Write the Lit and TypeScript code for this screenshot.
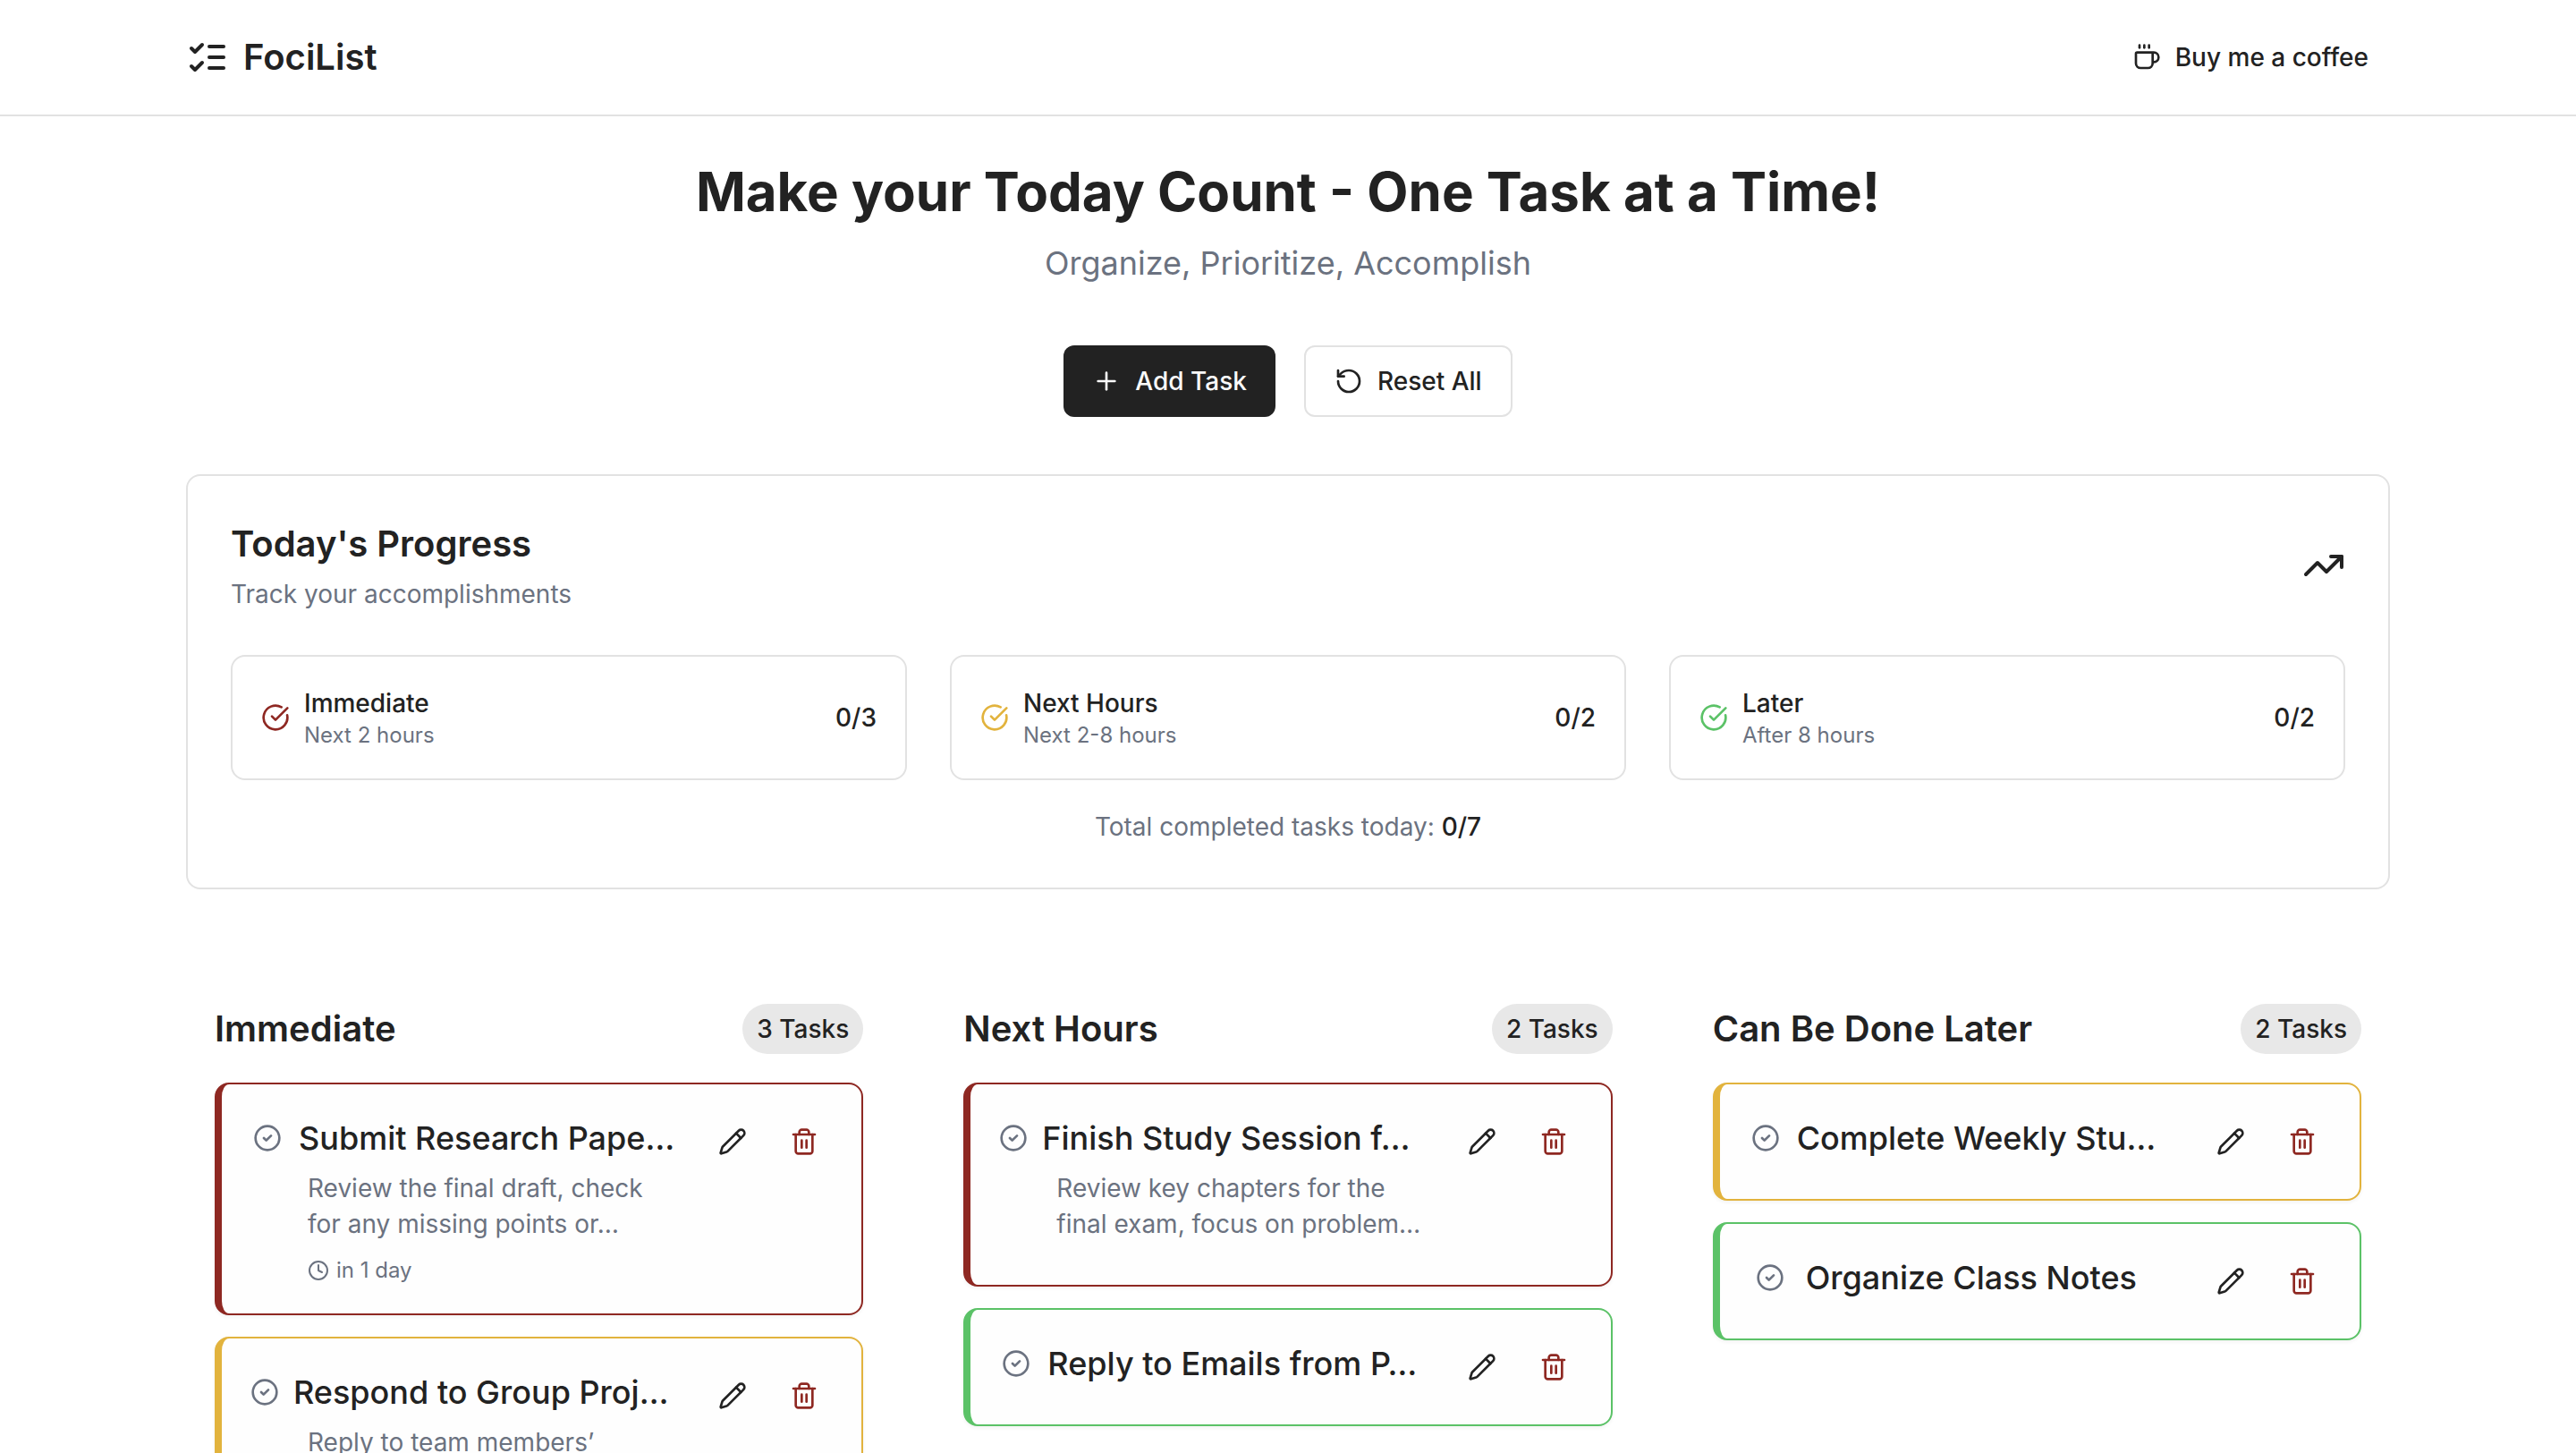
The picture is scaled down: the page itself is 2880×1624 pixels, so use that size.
import { LitElement, html, css, svg, nothing, type TemplateResult } from "lit";
import { customElement, property } from "lit/decorators.js";
import { classMap } from "lit/directives/class-map.js";

type Tone = "high" | "medium" | "low";
type Lead = "tight" | "normal" | "roomy";

interface Task {
  title: string;
  description?: string;
  due?: string;
  tone: Tone;
  lead: Lead;
}

interface Column {
  heading: string;
  count: number;
  tasks: Task[];
}

interface Stat {
  label: string;
  range: string;
  done: string;
  tone: Tone;
}

const shapes = {
  list: svg`<path d="m3 17 2 2 4-4"/><path d="m3 7 2 2 4-4"/><path d="M13 6h8"/><path d="M13 12h8"/><path d="M13 18h8"/>`,
  coffee: svg`<path d="M10 2v2"/><path d="M14 2v2"/><path d="M16 8a1 1 0 0 1 1 1v8a4 4 0 0 1-4 4H7a4 4 0 0 1-4-4V9a1 1 0 0 1 1-1h14a4 4 0 1 1 0 8h-1"/><path d="M6 2v2"/>`,
  plus: svg`<path d="M5 12h14"/><path d="M12 5v14"/>`,
  reset: svg`<path d="M3 12a9 9 0 1 0 9-9 9.75 9.75 0 0 0-6.74 2.74L3 8"/><path d="M3 3v5h5"/>`,
  trend: svg`<path d="M22 7 13.5 15.5 8.5 10.5 2 17"/><path d="M16 7h6v6"/>`,
  checkOpen: svg`<path d="M21.801 10A10 10 0 1 1 17 3.335"/><path d="m9 11 3 3L22 4"/>`,
  check: svg`<circle cx="12" cy="12" r="10"/><path d="m9 12 2 2 4-4"/>`,
  clock: svg`<circle cx="12" cy="12" r="10"/><path d="M12 6v6l4 2"/>`,
  pencil: svg`<path d="M21.174 6.812a1 1 0 0 0-3.986-3.987L3.842 16.174a2 2 0 0 0-.5.83l-1.321 4.352a.5.5 0 0 0 .623.622l4.353-1.32a2 2 0 0 0 .83-.497z"/><path d="m15 5 4 4"/>`,
  trash: svg`<path d="M3 6h18"/><path d="M19 6v14c0 1-1 2-2 2H7c-1 0-2-1-2-2V6"/><path d="M8 6V4c0-1 1-2 2-2h4c1 0 2 1 2 2v2"/><path d="M10 11v6"/><path d="M14 11v6"/>`,
};

const icon = (name: keyof typeof shapes, size: "sm" | "md" | "lg" = "md"): TemplateResult => html`
  <svg class="icon ${size}" viewBox="0 0 24 24" aria-hidden="true">${shapes[name]}</svg>
`;

const base = css`
  :host {
    --ink: #222222;
    --muted: #6b7280;
    --line: #e2e2e2;
    --high: #8e2822;
    --medium: #e2b33d;
    --low: #5bc267;
  }
  * {
    box-sizing: border-box;
    margin: 0;
  }
  button {
    font: inherit;
    color: inherit;
    border: 0;
    padding: 0;
    background: none;
    cursor: pointer;
  }
  .icon {
    display: block;
    flex: none;
    fill: none;
    stroke: currentColor;
    stroke-width: 2;
    stroke-linecap: round;
    stroke-linejoin: round;
  }
  .sm {
    width: 24px;
    height: 24px;
  }
  .md {
    width: 32px;
    height: 32px;
  }
  .lg {
    width: 48px;
    height: 48px;
  }
  .high {
    --tone: var(--high);
  }
  .medium {
    --tone: var(--medium);
  }
  .low {
    --tone: var(--low);
  }
`;

@customElement("task-card")
export class TaskCard extends LitElement {
  @property({ attribute: false }) task!: Task;

  static styles = [
    base,
    css`
      :host {
        display: block;
      }
      .card {
        display: flex;
        align-items: flex-start;
        gap: 16px;
        padding: 32px;
        border: 2px solid var(--tone);
        border-left-width: 8px;
        border-radius: 16px;
        background: #fefefe;
        box-shadow: 0 2px 4px rgba(0, 0, 0, 0.05);
      }
      .card.open {
        padding-bottom: 48px;
      }
      .body {
        flex: 1;
        min-width: 0;
        padding-right: 16px;
      }
      .head {
        display: flex;
        align-items: center;
        gap: 16px;
      }
      .toggle {
        display: flex;
        justify-content: center;
        width: 38px;
        flex: none;
        color: var(--muted);
      }
      .tight .toggle {
        width: 32px;
      }
      .roomy .toggle {
        width: 48px;
      }
      .title {
        font-size: 36px;
        line-height: 56px;
        font-weight: 500;
        white-space: nowrap;
      }
      .details {
        display: flex;
        flex-direction: column;
        gap: 16px;
        padding: 8px 0 0 64px;
        color: var(--muted);
      }
      .description {
        font-size: 28px;
        line-height: 40px;
      }
      .due {
        display: flex;
        align-items: center;
        gap: 8px;
        font-size: 24px;
        line-height: 32px;
      }
      .actions {
        display: flex;
        gap: 16px;
      }
      .action {
        display: grid;
        place-items: center;
        width: 64px;
        height: 64px;
        border-radius: 12px;
      }
      .remove {
        color: var(--high);
      }
    `,
  ];

  render() {
    const { title, description, due, tone, lead } = this.task;
    const open = Boolean(description) && !due;
    return html`
      <article class=${classMap({ card: true, [tone]: true, open })}>
        <div class="body">
          <div class="head ${lead}">
            <button class="toggle" aria-label="Mark as done">${icon("check")}</button>
            <h3 class="title">${title}</h3>
          </div>
          ${description
            ? html`<div class="details">
                <p class="description">${description}</p>
                ${due ? html`<p class="due">${icon("clock", "sm")}<span>${due}</span></p>` : nothing}
              </div>`
            : nothing}
        </div>
        <div class="actions">
          <button class="action" aria-label="Edit task">${icon("pencil")}</button>
          <button class="action remove" aria-label="Delete task">${icon("trash")}</button>
        </div>
      </article>
    `;
  }
}

@customElement("app-root")
export class AppRoot extends LitElement {
  private stats: Stat[] = [
    { label: "Immediate", range: "Next 2 hours", done: "0/3", tone: "high" },
    { label: "Next Hours", range: "Next 2-8 hours", done: "0/2", tone: "medium" },
    { label: "Later", range: "After 8 hours", done: "0/2", tone: "low" },
  ];

  private columns: Column[] = [
    {
      heading: "Immediate",
      count: 3,
      tasks: [
        {
          title: "Submit Research Pape…",
          description: "Review the final draft, check for any missing points or…",
          due: "in 1 day",
          tone: "high",
          lead: "normal",
        },
        {
          title: "Respond to Group Proj…",
          description: "Reply to team members’",
          tone: "medium",
          lead: "tight",
        },
      ],
    },
    {
      heading: "Next Hours",
      count: 2,
      tasks: [
        {
          title: "Finish Study Session f…",
          description: "Review key chapters for the final exam, focus on problem…",
          tone: "high",
          lead: "tight",
        },
        { title: "Reply to Emails from P…", tone: "low", lead: "normal" },
      ],
    },
    {
      heading: "Can Be Done Later",
      count: 2,
      tasks: [
        { title: "Complete Weekly Stu…", tone: "medium", lead: "normal" },
        { title: "Organize Class Notes", tone: "low", lead: "roomy" },
      ],
    },
  ];

  static styles = [
    base,
    css`
      :host {
        display: block;
        height: 100vh;
        overflow: hidden;
        background: #ffffff;
        color: var(--ink);
        font-family: Inter, "Liberation Sans", sans-serif;
        font-size: 28px;
        line-height: 40px;
      }
      .container {
        max-width: 2560px;
        margin: 0 auto;
        padding: 0 48px;
      }
      .topbar {
        border-bottom: 2px solid var(--line);
      }
      .topbar .container {
        display: flex;
        align-items: center;
        justify-content: space-between;
        height: 128px;
      }
      .brand {
        display: flex;
        align-items: center;
        gap: 16px;
        font-size: 40px;
        line-height: 56px;
        font-weight: 600;
        color: inherit;
        text-decoration: none;
      }
      .coffee {
        display: flex;
        align-items: center;
        gap: 16px;
        padding: 16px 24px;
        font-weight: 500;
        color: inherit;
        text-decoration: none;
      }
      .hero {
        display: flex;
        flex-direction: column;
        align-items: center;
        padding: 48px 0 64px;
        text-align: center;
      }
      .headline {
        font-size: 60px;
        line-height: 72px;
        font-weight: 700;
      }
      .tagline {
        margin: 16px 0 64px;
        font-size: 36px;
        line-height: 56px;
        color: var(--muted);
      }
      .buttons {
        display: flex;
        gap: 32px;
      }
      .button {
        display: flex;
        align-items: center;
        gap: 16px;
        height: 80px;
        padding: 0 32px;
        border-radius: 12px;
        font-weight: 500;
      }
      .primary {
        background: var(--ink);
        color: #fafafa;
      }
      .outline {
        border: 2px solid var(--line);
      }
      .progress {
        padding: 48px;
        border: 2px solid var(--line);
        border-radius: 16px;
      }
      .progress-head {
        display: flex;
        align-items: center;
        justify-content: space-between;
      }
      .heading {
        font-size: 40px;
        line-height: 56px;
        font-weight: 600;
      }
      .caption {
        margin-top: 8px;
        color: var(--muted);
      }
      .stats {
        display: grid;
        grid-template-columns: repeat(3, 1fr);
        gap: 48px;
        margin: 48px 0 32px;
      }
      .stat {
        display: flex;
        align-items: center;
        gap: 16px;
        padding: 32px;
        border: 2px solid var(--line);
        border-radius: 16px;
      }
      .stat .icon {
        color: var(--tone);
      }
      .stat-text {
        flex: 1;
      }
      .strong {
        font-weight: 500;
        color: var(--ink);
      }
      .range {
        font-size: 24px;
        line-height: 32px;
        color: var(--muted);
      }
      .total {
        text-align: center;
        color: var(--muted);
      }
      .board {
        display: grid;
        grid-template-columns: repeat(3, 1fr);
        gap: 48px;
        margin-top: 96px;
      }
      .column {
        min-width: 0;
        padding: 32px;
      }
      .column-head {
        display: flex;
        align-items: center;
        justify-content: space-between;
        margin-bottom: 32px;
      }
      .badge {
        padding: 8px 16px;
        border-radius: 28px;
        background: #e8e8e8;
        font-weight: 500;
      }
      .cards {
        display: grid;
        gap: 24px;
      }
    `,
  ];

  render() {
    return html`
      <header class="topbar">
        <div class="container">
          <a class="brand" href="#">${icon("list", "lg")}<span>FociList</span></a>
          <a class="coffee" href="#">${icon("coffee")}<span>Buy me a coffee</span></a>
        </div>
      </header>
      <main class="container">
        <section class="hero">
          <h1 class="headline">Make your Today Count - One Task at a Time!</h1>
          <p class="tagline">Organize, Prioritize, Accomplish</p>
          <div class="buttons">
            <button class="button primary">${icon("plus")}<span>Add Task</span></button>
            <button class="button outline">${icon("reset")}<span>Reset All</span></button>
          </div>
        </section>
        <section class="progress">
          <div class="progress-head">
            <div>
              <h2 class="heading">Today's Progress</h2>
              <p class="caption">Track your accomplishments</p>
            </div>
            ${icon("trend", "lg")}
          </div>
          <div class="stats">
            ${this.stats.map(
              (s) => html`
                <div class="stat ${s.tone}">
                  ${icon("checkOpen")}
                  <div class="stat-text">
                    <p class="strong">${s.label}</p>
                    <p class="range">${s.range}</p>
                  </div>
                  <span class="strong">${s.done}</span>
                </div>
              `,
            )}
          </div>
          <p class="total">Total completed tasks today: <span class="strong">0/7</span></p>
        </section>
        <section class="board">
          ${this.columns.map(
            (c) => html`
              <section class="column">
                <div class="column-head">
                  <h2 class="heading">${c.heading}</h2>
                  <span class="badge">${c.count} Tasks</span>
                </div>
                <div class="cards">
                  ${c.tasks.map((t) => html`<task-card .task=${t}></task-card>`)}
                </div>
              </section>
            `,
          )}
        </section>
      </main>
    `;
  }
}
